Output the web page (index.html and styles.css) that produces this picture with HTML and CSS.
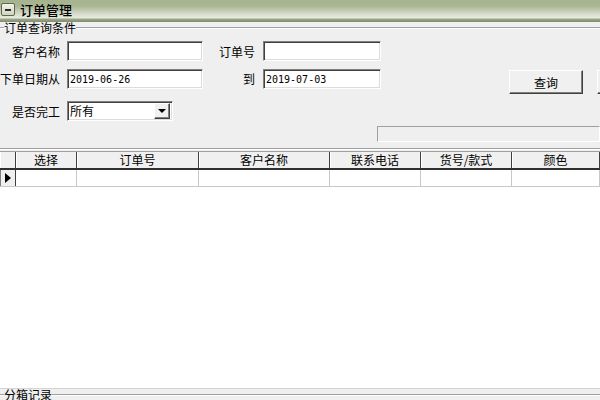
FILE: index.html
```html
<!DOCTYPE html>
<html lang="zh-CN">

<head>
    <meta charset="UTF-8">
    <meta name="viewport" content="width=device-width, initial-scale=1.0">
    <title>订单管理</title>
    <link rel="stylesheet" href="styles.css">
</head>

<body>
    <!-- 标题栏 -->
    <div class="titlebar">
        <span class="sys-icon"><span class="sys-minus"></span></span>
        <span class="title">订单管理</span>
    </div>

    <!-- 查询条件 -->
    <div class="legend">
        <span class="legend-lead"></span>
        <span class="legend-text">订单查询条件</span>
        <span class="legend-line"></span>
    </div>

    <div class="form-row row-1">
        <label class="lbl">客户名称</label>
        <input class="field field-a" type="text" value="">
        <label class="lbl lbl-2">订单号</label>
        <input class="field field-b" type="text" value="">
    </div>

    <div class="form-row row-2">
        <label class="lbl">下单日期从</label>
        <input class="field field-a" type="text" value="2019-06-26">
        <label class="lbl lbl-2">到</label>
        <input class="field field-b" type="text" value="2019-07-03">
        <button class="btn btn-query">查询</button>
        <button class="btn btn-next"></button>
    </div>

    <div class="form-row row-3">
        <label class="lbl">是否完工</label>
        <div class="combo">
            <span class="combo-text">所有</span>
            <span class="combo-btn"><span class="arrow-down"></span></span>
        </div>
    </div>

    <div class="progress"></div>
    <div class="group-end"></div>

    <!-- 订单列表 -->
    <div class="grid">
        <div class="grid-head">
            <div class="hcell"></div>
            <div class="hcell">选择</div>
            <div class="hcell">订单号</div>
            <div class="hcell">客户名称</div>
            <div class="hcell">联系电话</div>
            <div class="hcell">货号/款式</div>
            <div class="hcell">颜色</div>
        </div>
        <div class="grid-row">
            <div class="cell row-mark"><span class="arrow-right"></span></div>
            <div class="cell"></div>
            <div class="cell"></div>
            <div class="cell"></div>
            <div class="cell"></div>
            <div class="cell"></div>
            <div class="cell"></div>
        </div>
    </div>

    <!-- 分箱记录 -->
    <div class="legend legend-bottom">
        <span class="legend-lead"></span>
        <span class="legend-text">分箱记录</span>
        <span class="legend-line"></span>
    </div>
</body>

</html>
```

FILE: styles.css
```css
* {
    margin: 0;
    padding: 0;
    box-sizing: border-box;
}

body {
    width: 600px;
    height: 400px;
    overflow: hidden;
    background: #efefef;
    font-family: "Noto Sans CJK SC", "Liberation Sans", sans-serif;
    font-size: 12px;
    color: #000;
}

/* 标题栏 */
.titlebar {
    height: 22px;
    display: flex;
    align-items: center;
    background: linear-gradient(to bottom, #a6b38f 0px, #a9b693 6px, #d6dccb 14px, #e8ebdf 18px, #9aa788 19px, #8a9877 21px, #7e8c6d 22px);
    padding-bottom: 3px;
}

.sys-icon {
    width: 14px;
    height: 13px;
    margin-left: 1px;
    border: 1px solid #5e6650;
    border-radius: 2px;
    background: linear-gradient(to bottom, #f3f4ec, #cfd5bd);
    display: flex;
    align-items: center;
    justify-content: center;
}

.sys-minus {
    width: 6px;
    height: 2px;
    background: #2b2b2b;
}

.title {
    margin-left: 5px;
    font-size: 13px;
    line-height: 14px;
    font-weight: 500;
}

/* 分组标题 */
.legend {
    height: 12px;
    display: flex;
    align-items: center;
}

.legend-lead {
    width: 4px;
    border-top: 1px solid #a0a0a0;
    border-bottom: 1px solid #fff;
}

.legend-text {
    line-height: 12px;
}

.legend-line {
    flex: 1;
    border-top: 1px solid #a0a0a0;
    border-bottom: 1px solid #fff;
}

/* 表单 */
.form-row {
    height: 20px;
    display: flex;
    align-items: center;
}

.form-row > * {
    flex-shrink: 0;
}

.row-1 {
    margin-top: 7px;
}

.row-2 {
    margin-top: 8px;
    height: 26px;
    margin-bottom: -6px;
    align-items: flex-start;
    overflow: hidden;
}

.row-2 .lbl {
    line-height: 20px;
}

.row-3 {
    margin-top: 12px;
}

.lbl {
    width: 60px;
    text-align: right;
    white-space: nowrap;
}

.lbl-2 {
    width: 52px;
}

.field {
    height: 20px;
    border: 1px solid;
    border-color: #808080 #fff #fff #808080;
    box-shadow: inset 1px 1px 0 #404040, inset -1px -1px 0 #dcdcdc;
    background: #fff;
    outline: none;
    padding: 0 2px;
    font-family: "DejaVu Sans Mono", "Liberation Mono", monospace;
    font-size: 10px;
    color: #000;
}

.field-a {
    width: 136px;
    margin-left: 7px;
}

.field-b {
    width: 118px;
    margin-left: 8px;
}

/* 按钮 */
.btn {
    height: 24px;
    margin-top: 1px;
    background: #f0f0f0;
    border: 1px solid;
    border-color: #fff #404040 #404040 #fff;
    box-shadow: inset -1px -1px 0 #808080;
    font-family: inherit;
    font-size: 12px;
}

.btn-query {
    width: 74px;
    margin-left: 128px;
}

.btn-next {
    width: 74px;
    margin-left: 14px;
}

/* 下拉框 */
.combo {
    width: 106px;
    height: 20px;
    margin-left: 7px;
    display: flex;
    align-items: center;
    background: #fff;
    border: 1px solid;
    border-color: #808080 #fff #fff #808080;
    box-shadow: inset 1px 1px 0 #404040, inset -1px -1px 0 #dcdcdc;
    padding: 2px;
}

.combo-text {
    flex: 1;
    line-height: 14px;
}

.combo-btn {
    width: 16px;
    height: 16px;
    background: #f0f0f0;
    border: 1px solid;
    border-color: #fff #404040 #404040 #fff;
    box-shadow: inset -1px -1px 0 #808080;
    display: flex;
    align-items: center;
    justify-content: center;
}

.arrow-down {
    width: 0;
    height: 0;
    border-left: 4px solid transparent;
    border-right: 4px solid transparent;
    border-top: 4px solid #000;
}

/* 进度条 */
.progress {
    height: 16px;
    margin-top: 5px;
    margin-left: 377px;
    border: 1px solid;
    border-color: #a0a0a0 #fff #fff #a0a0a0;
}

.group-end {
    margin-top: 6px;
    border-top: 1px solid #a0a0a0;
    border-bottom: 1px solid #fff;
}

/* 表格 */
.grid {
    height: 238px;
    margin-top: 1px;
    background: #fff;
    border-bottom: 1px solid #d4d4d4;
}

.grid-head,
.grid-row {
    display: grid;
    grid-template-columns: 16px 61px 122px 131px 91px 91px 88px;
}

.grid-head {
    height: 19px;
    background: #f0f0f0;
    border-top: 1px solid #a0a0a0;
    border-bottom: 2px solid #303030;
}

.hcell {
    height: 16px;
    line-height: 16px;
    text-align: center;
    border-right: 1px solid #404040;
    box-shadow: inset 1px 0 0 #fff;
    white-space: nowrap;
}

.grid-row {
    height: 17px;
    border-bottom: 1px solid #c8c8c8;
}

.cell {
    border-right: 1px solid #c8c8c8;
}

.row-mark {
    background: #f0f0f0;
    border-right: 1px solid #404040;
    border-left: 1px solid #808080;
    display: flex;
    align-items: center;
    padding-left: 4px;
}

.arrow-right {
    width: 0;
    height: 0;
    border-top: 5px solid transparent;
    border-bottom: 5px solid transparent;
    border-left: 6px solid #000;
}

.legend-bottom {
    height: 14px;
    margin-top: -1px;
}
```
